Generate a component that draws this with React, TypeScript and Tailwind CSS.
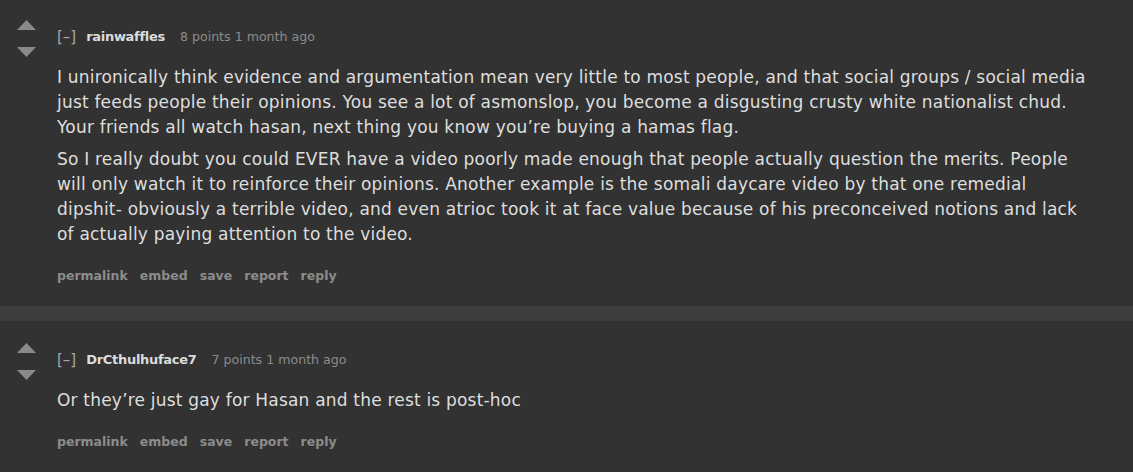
import React from 'react';

interface CommentProps {
  author: string;
  points: number;
  age: string;
  paragraphs: string[][];
  topPad: string;
}

const ACTIONS = ['permalink', 'embed', 'save', 'report', 'reply'];

const Arrow = ({ down }: { down?: boolean }) => (
  <svg width="19" height="10" viewBox="0 0 19 10" className="block">
    <path d={down ? 'M0 0h19L9.5 10z' : 'M9.5 0L19 10H0z'} fill="#8a8a8a" />
  </svg>
);

const Comment = ({ author, points, age, paragraphs, topPad }: CommentProps) => (
  <div className={`flex ${topPad} pb-[20px]`}>
    {/* Vote arrows */}
    <div className="w-[57px] shrink-0 pl-[17px] flex flex-col gap-[17px]">
      <Arrow />
      <Arrow down />
    </div>

    <div className="flex-1 min-w-0 pt-[7px]">
      <div className="flex items-center text-[13px] leading-[20px]">
        <span className="text-[15px] text-[#a5a5a5]">[–]</span>
        <span className="ml-[10px] font-bold text-[#dcdcdc] tracking-[-0.3px]">{author}</span>
        <span className="ml-[15px] text-[12.6px] text-[#8c8c8c]">
          {points} points {age}
        </span>
      </div>

      {/* body, wrapped the same way as the original */}
      <div className="mt-[18px] flex flex-col gap-[7px] text-[17px] leading-[25px] tracking-[0.2px] text-[#dedede] whitespace-nowrap">
        {paragraphs.map((lines, i) => (
          <p key={i}>
            {lines.map((l, j) => (
              <React.Fragment key={j}>
                {j > 0 && <br />}
                {l}
              </React.Fragment>
            ))}
          </p>
        ))}
      </div>

      <div className="mt-[19px] flex gap-[12px] text-[12.5px] leading-[20px] font-bold text-[#8c8c8c]">
        {ACTIONS.map((a) => (
          <span key={a}>{a}</span>
        ))}
      </div>
    </div>
  </div>
);

export default function App() {
  return (
    <div className="min-h-screen bg-[#323232] font-['DejaVu_Sans',Verdana,sans-serif]">
      <Comment
        author="rainwaffles"
        points={8}
        age="1 month ago"
        topPad="pt-[20px]"
        paragraphs={[
          [
            'I unironically think evidence and argumentation mean very little to most people, and that social groups / social media',
            'just feeds people their opinions. You see a lot of asmonslop, you become a disgusting crusty white nationalist chud.',
            'Your friends all watch hasan, next thing you know you\u2019re buying a hamas flag.',
          ],
          [
            'So I really doubt you could EVER have a video poorly made enough that people actually question the merits. People',
            'will only watch it to reinforce their opinions. Another example is the somali daycare video by that one remedial',
            'dipshit- obviously a terrible video, and even atrioc took it at face value because of his preconceived notions and lack',
            'of actually paying attention to the video.',
          ],
        ]}
      />
      <div className="h-[15px] bg-[#3d3d3d]" />
      <Comment
        author="DrCthulhuface7"
        points={7}
        age="1 month ago"
        topPad="pt-[22px]"
        paragraphs={[['Or they\u2019re just gay for Hasan and the rest is post-hoc']]}
      />
    </div>
  );
}
